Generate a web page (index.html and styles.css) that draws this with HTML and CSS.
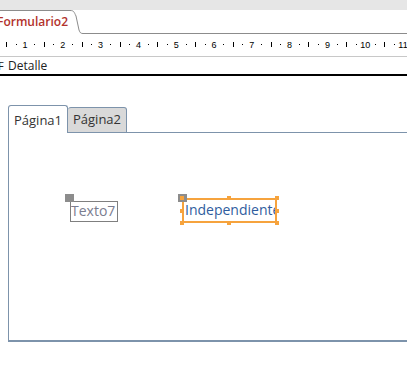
FILE: index.html
```html
<!DOCTYPE html>
<html>
<head>
<meta charset="utf-8">
<link rel="stylesheet" href="styles.css">
</head>
<body>
<div class="app">
  <div class="topstrip"></div>
  <div class="doctabs">
    <div class="doctab">
      <span class="doctab-label">Formulario2</span>
      <svg class="doctab-edge" width="14" height="24" viewBox="0 0 14 24"><path d="M0 0.5 H1 C5 0.5 5 2 7 6 L10 20 C11 23 12 23.5 14 23.5" fill="#fff" stroke="#8c8c8c" stroke-width="1"/><rect x="0" y="1" width="1" height="23" fill="#fff"/></svg>
    </div>
    <div class="doctab-rest"></div>
  </div>
  <div class="ruler">
    <svg width="407" height="22" viewBox="0 0 407 22" id="rulersvg"></svg>
  </div>
  <div class="section">
    <span class="section-icon">F</span>
    <span class="section-label">Detalle</span>
  </div>
  <div class="canvas">
    <div class="tabctl">
      <div class="tabstrip">
        <div class="tab active">Página1</div>
        <div class="tab">Página2</div>
        <div class="tab-fill"></div>
      </div>
      <div class="tabpage">
        <div class="ctl label-ctl" style="left:61px;top:68px;width:48px;height:21px">Texto7</div>
        <div class="grip" style="left:56px;top:61px"></div>
        <div class="ctl text-ctl" style="left:173px;top:65px;width:95px;height:25px">Independiente</div>
        <div class="grip" style="left:169px;top:61px"></div>
        <div class="h" style="left:171px;top:63px"></div>
        <div class="h" style="left:218px;top:63px"></div>
        <div class="h" style="left:266px;top:63px"></div>
        <div class="h" style="left:171px;top:76px"></div>
        <div class="h" style="left:266px;top:76px"></div>
        <div class="h" style="left:171px;top:88px"></div>
        <div class="h" style="left:218px;top:88px"></div>
        <div class="h" style="left:266px;top:88px"></div>
      </div>
    </div>
  </div>
</div>
<script src="ruler.js"></script>
</body>
</html>
```

FILE: ruler.js
```js
(function(){
  var svg = document.getElementById('rulersvg');
  var cm = 37.8, x0 = -12.8, out = '';
  for (var i = 0; i <= 12; i++) {
    var x = x0 + i * cm;
    if (i > 0) {
      out += '<text x="' + x.toFixed(1) + '" y="14" text-anchor="middle" class="rn">' + i + '</text>';
    }
    var q = [0.25, 0.5, 0.75];
    for (var k = 0; k < 3; k++) {
      var xx = Math.round(x + q[k] * cm);
      if (k === 1) out += '<rect x="' + xx + '" y="8" width="1" height="5" fill="#000"/>';
      else out += '<rect x="' + xx + '" y="10" width="1" height="1" fill="#000"/>';
    }
  }
  svg.innerHTML = out;
})();
```

FILE: styles.css
```css
html, body { margin: 0; padding: 0; background: #fff; }
body { width: 407px; height: 383px; overflow: hidden; font-family: "Open Sans", "Noto Sans", sans-serif; }
.app { display: flex; flex-direction: column; }
.topstrip { height: 10px; background: #e6e6e6; }
.doctabs { display: flex; height: 24px; background: #fff; }
.doctab { display: flex; position: relative; }
.doctab-label { display: block; height: 23px; line-height: 21px; margin-left: -3px; padding-right: 1px; font-size: 12px; font-weight: 600; color: #b2322c; border-top: 1px solid #8c8c8c; background: #fff; }
.doctab-edge { display: block; }
.doctab-rest { flex: 1; border-bottom: 1px solid #8c8c8c; }
.ruler { height: 22px; border-bottom: 1px solid #c8c8c8; background: #fff; }
.ruler svg { display: block; }
.rn { font-family: "Liberation Sans", sans-serif; font-size: 9px; fill: #000; }
.section { height: 17px; display: flex; align-items: center; border-bottom: 2px solid #000; font-size: 12px; color: #222; }
.section-icon { margin-left: -2px; width: 9px; font-size: 11px; }
.section-label { margin-left: 1px; }
.canvas { padding: 29px 0 0 8px; }
.tabctl { width: 420px; }
.tabstrip { display: flex; align-items: flex-end; height: 28px; }
.tab { height: 24px; padding: 0 5px; font-size: 13px; line-height: 22px; color: #333; background: #d9d9d9; border: 1px solid #7d93ab; border-left: none; border-radius: 3px 3px 0 0; font-family: "Open Sans", sans-serif; }
.tab.active { height: 27px; background: #fff; border-left: 1px solid #7d93ab; border-bottom: none; line-height: 28px; }
.tab-fill { flex: 1; border-bottom: 1px solid #7d93ab; }
.tabpage { position: relative; height: 207px; border-left: 1px solid #7d93ab; border-bottom: 2px solid #7d93ab; }
.ctl { position: absolute; box-sizing: border-box; font-size: 14px; white-space: nowrap; overflow: hidden; }
.label-ctl { border: 1px solid #7f7f7f; color: #7b7d8f; line-height: 18px; padding-left: 0; }
.text-ctl { border: 2px solid #f6a33d; color: #2f5d9e; line-height: 20px; padding-left: 1px; }
.grip { position: absolute; width: 9px; height: 8px; background: #8c8c8c; }
.h { position: absolute; width: 4px; height: 4px; background: #f6a33d; }
```
